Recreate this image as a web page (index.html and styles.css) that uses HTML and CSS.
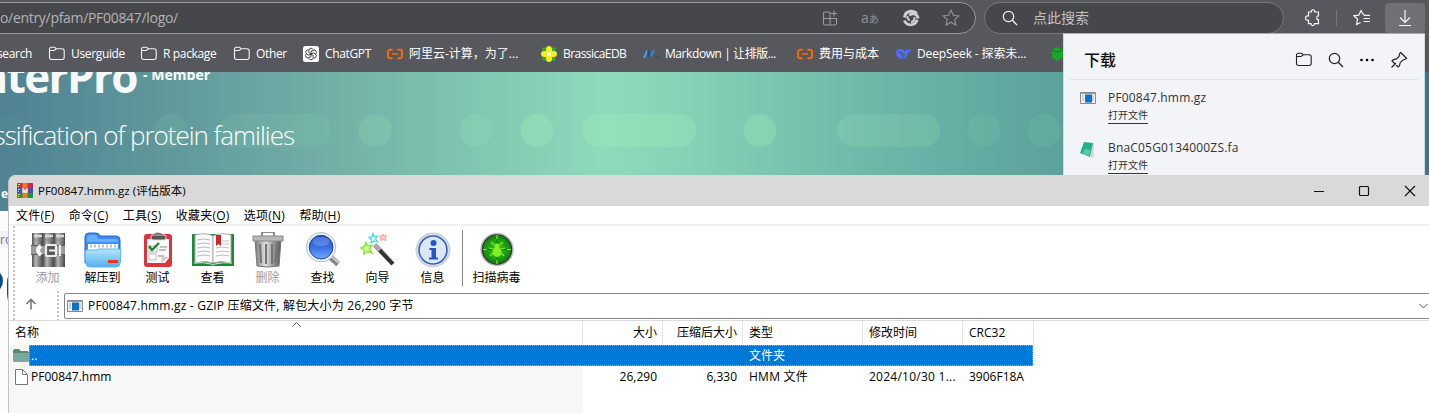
FILE: index.html
```html
<!DOCTYPE html>
<html lang="zh-CN">
<head>
<meta charset="utf-8">
<title>InterPro</title>
<link rel="stylesheet" href="styles.css">
</head>
<body>
<svg class="defs" width="0" height="0">
  <defs>
    <symbol id="folder-line" viewBox="0 0 18 18"><path d="M1.500 4.200q0-2 2-2h2.600q.8 0 1.300.6l1 1h5.600q2.200 0 2.200 2.200v6.300q0 2.200-2.200 2.200H3.700q-2.200 0-2.200-2.200zM1.700 5.500h4q.7 0 1.200-.6l1.300-1.100" fill="none" stroke="currentColor" stroke-width="1.100"/></symbol>
    <symbol id="search" viewBox="0 0 16 16"><circle cx="6.500" cy="6.500" r="5.200" fill="none" stroke="currentColor" stroke-width="1.200"/><path d="M10.300 10.300l4.700 4.700" stroke="currentColor" stroke-width="1.300"/></symbol>
    <symbol id="aliyun" viewBox="0 0 16 12"><path d="M5.500 1.800H3.500Q1 1.800 1 4v4q0 2.200 2.500 2.200h2M10.500 1.800h2Q15 1.800 15 4v4q0 2.200-2.500 2.200h-2" fill="none" stroke="#ff6a00" stroke-width="1.900"/><path d="M5 6h6" stroke="#ff6a00" stroke-width="1.400"/></symbol>
    <symbol id="archive" viewBox="0 0 16 12"><path d="M.5.500h15v11H.5z" fill="#f4f4f4" stroke="#888"/><path d="M1 1.500h14" stroke="#999"/><path d="M2 4h2M2 6h2M2 8h2M12 4h2M12 6h2M12 8h2" stroke="#aaa"/><path d="M5 2.500h7v8H5z" fill="#0b72c8"/></symbol>
    <linearGradient id="book" x2="1"><stop offset="0" stop-color="#505050"/><stop offset=".35" stop-color="#b8b8b8"/><stop offset=".6" stop-color="#8a8a8a"/><stop offset="1" stop-color="#484848"/></linearGradient>
    <linearGradient id="metal" x2="1"><stop offset="0" stop-color="#777"/><stop offset=".4" stop-color="#e4e4e4"/><stop offset="1" stop-color="#555"/></linearGradient>
    <linearGradient id="sky" x2="0" y2="1"><stop offset="0" stop-color="#b5e4ff"/><stop offset="1" stop-color="#55b0f2"/></linearGradient>
    <linearGradient id="lens" x2="0" y2="1"><stop offset="0" stop-color="#1c43bd"/><stop offset=".5" stop-color="#3a6fe0"/><stop offset="1" stop-color="#6aaaff"/></linearGradient>
    <radialGradient id="radar"><stop offset="0" stop-color="#37c91c"/><stop offset="1" stop-color="#128812"/></radialGradient>
  </defs>
</svg>
<div class="screen">
  <header class="toolbar">
    <div class="address">
      <span class="url">o/entry/pfam/PF00847/logo/</span>
      <div class="address-icons">
        <svg width="16" height="16" viewBox="0 0 16 16" fill="none" stroke="#9b9b9d" stroke-width="1.100"><path d="M7.500 2H3Q1.500 2 1.500 3.500v10Q1.500 15 3 15h10q1.500 0 1.500-1.500V8.500h-13M8 2v13M12 .5v6M9 3.500h6"/></svg>
        <span class="translate">a<small>あ</small></span>
        <svg width="18" height="18" viewBox="0 0 18 18" fill="none" stroke="#cfcfd0"><path d="M2.500 8.500Q3 3 8.500 2.300q4-.3 6.300 2.700" stroke-width="3"/><path d="M2.300 11.500Q4 15.500 8.500 15.800q5 0 6.800-5" stroke-width="2.800"/><path d="M7.500 6.500Q9 4 12.500 5q3.500 1.200 3.500 4.500" stroke-width="2.800"/><path d="M12.500 8q.5 4.500-3.500 5" stroke-width="2"/><path d="M5.500 7q-.5 3 2.200 4.500" stroke-width="2"/></svg>
        <svg width="18" height="18" viewBox="0 0 18 18"><path d="M9 1.300l2.300 5 5.400.6-4 3.700 1.100 5.400L9 13.300 4.200 16l1.100-5.400-4-3.700 5.400-.6z" fill="none" stroke="#929295" stroke-width="1.200"/></svg>
      </div>
    </div>
    <div class="search"><svg width="16" height="16"><use href="#search"/></svg><span>点此搜索</span></div>
    <div class="actions">
      <svg width="18" height="18" viewBox="0 0 18 18" fill="none" stroke="#f5f5f5" stroke-width="1.200"><path d="M4.500 3h3Q7 .8 9 .8t1.700 2.200h3.800v4q-1.800-.3-1.800 1.800t1.800 1.900v4h-4q-.2 1.900-1.800 1.900T7 14.700H4.500v-3.500Q1.500 11.500 1.500 9t3-2z"/></svg>
      <i class="divider"></i>
      <svg width="18" height="18" viewBox="0 0 18 18" fill="none" stroke="#f5f5f5" stroke-width="1.200"><path d="M10 5L8 1.500 5.800 6.200 1 6.800l3.600 3.500-1 5.200 4-2M10 5l1 1M11 6.300h6M10.500 9.500H17M10.500 12.500H17"/></svg>
      <span class="dl"><svg width="18" height="18" viewBox="0 0 18 18" fill="none" stroke="#f5f5f5" stroke-width="1.200"><path d="M9 1v12M4 8.500l5 5 5-5M3 16.500h12"/></svg></span>
    </div>
  </header>
  <nav class="bookmarks">
    <div class="bm b0"><span class="t0">search</span></div>
    <div class="bm b1"><svg width="18" height="18"><use href="#folder-line"/></svg><span>Userguide</span></div>
    <div class="bm b2"><svg width="18" height="18"><use href="#folder-line"/></svg><span>R package</span></div>
    <div class="bm b3"><svg width="18" height="18"><use href="#folder-line"/></svg><span>Other</span></div>
    <div class="bm b4"><svg width="16" height="16" viewBox="0 0 16 16"><rect width="16" height="16" rx="2.500" fill="#fff"/><g fill="none" stroke="#222" stroke-width=".8"><path id="petal" d="M5.800 6.700V4.300q.3-2 2.200-2.100 1.500 0 2.300 1.400M5.800 6.700L8 8"/><use href="#petal" transform="rotate(60 8 8)"/><use href="#petal" transform="rotate(120 8 8)"/><use href="#petal" transform="rotate(180 8 8)"/><use href="#petal" transform="rotate(240 8 8)"/><use href="#petal" transform="rotate(300 8 8)"/></g></svg><span>ChatGPT</span></div>
    <div class="bm b5"><svg width="16" height="12"><use href="#aliyun"/></svg><span>阿里云-计算，为了...</span></div>
    <div class="bm b6"><svg width="16" height="16" viewBox="0 0 16 16"><path d="M1.500 1.500h4v4h-4zM10.500 1.500h4v4h-4zM1.500 10.500h4v4h-4zM10.500 10.500h4v4h-4z" fill="#2eae34"/><g fill="#ffed16"><ellipse cx="8" cy="3.500" rx="3" ry="3.500"/><ellipse cx="8" cy="12.500" rx="3" ry="3.500"/><ellipse cx="3.500" cy="8" rx="3.500" ry="3"/><ellipse cx="12.500" cy="8" rx="3.500" ry="3"/><circle cx="8" cy="8" r="4"/></g><circle cx="8" cy="8" r="2" fill="#fff"/></svg><span>BrassicaEDB</span></div>
    <div class="bm b7"><svg width="16" height="12" viewBox="0 0 16 12" fill="none" stroke-width="1.800"><path d="M1 10L4.500 2" stroke="#4aa8f0"/><path d="M5 2l2 8" stroke="#154e86"/><path d="M7.500 9L11 2" stroke="#2b8cdc"/><path d="M13.500 9.200h2" stroke="#155494"/></svg><span>Markdown | 让排版...</span></div>
    <div class="bm b8"><svg width="16" height="12"><use href="#aliyun"/></svg><span>费用与成本</span></div>
    <div class="bm b9"><svg width="16" height="14" viewBox="0 0 16 14"><path d="M1 5q1-4 6-3 2 1 3 3l1-2q-1-2 0-2 1 2 2 2t3-1q0 3-3 4-.5 3-2 4l1 1.500q-2 .5-3.500-.5Q5 13 2.500 10 .6 8 1 5z" fill="#4d6bfe"/><path d="M3.500 5q3 0 5 5M8.500 7l1.500 1" stroke="#57585d" stroke-width="1.300" fill="none"/></svg><span>DeepSeek - 探索未...</span></div>
    <div class="bm b10"><svg width="14" height="16" viewBox="0 0 14 16"><path d="M1 3.500l5-2.500 6 2.500v8L6.500 15 1 11.500z" fill="#19a52b"/><path d="M0 4l6 2 6-2" stroke="#0d7f20" fill="none"/></svg></div>
  </nav>
  <main class="page">
    <section class="hero">
      <svg class="pattern" width="1429" height="139" fill="#9ff0b8"><g opacity=".04"><circle cx="9" cy="58.500" r="16.500"/></g><g opacity=".09"><circle cx="171" cy="58.500" r="16.500"/><rect x="218" y="42" width="113" height="33" rx="16.500"/><circle cx="984" cy="58.500" r="16.500"/><circle cx="1044" cy="58.500" r="16.500"/></g><g opacity=".17"><circle cx="375" cy="58.500" r="16.500"/><circle cx="476" cy="58.500" r="16.500"/><rect x="837" y="42" width="103" height="33" rx="16.500"/></g><g opacity=".32"><circle cx="537" cy="58.500" r="16.500"/><rect x="582" y="42" width="114" height="33" rx="16.500"/><circle cx="760" cy="58.500" r="16.500"/></g></svg>
      <div class="brand"><h1>InterPro</h1><span class="member">- Member</span></div>
      <p class="tagline">Classification of protein families</p>
      <span class="hero-tab">e</span>
    </section>
    <div class="tabrow">ro</div>
    <svg class="dots" width="12" height="40" viewBox="0 0 12 40"><circle cx="-10" cy="11" r="13" fill="#0d4b83"/><path d="M9 5q-2 3-2 8v11q0 5 2 8z" fill="#0d4b83"/></svg>
  </main>

  <aside class="downloads">
    <div class="dl-head"><h2>下载</h2>
      <svg width="18" height="18"><use href="#folder-line"/></svg>
      <svg width="16" height="16"><use href="#search"/></svg>
      <svg width="16" height="16" viewBox="0 0 16 16"><circle cx="2.500" cy="8" r="1.300"/><circle cx="8" cy="8" r="1.300"/><circle cx="13.500" cy="8" r="1.300"/></svg>
      <svg width="18" height="18" viewBox="0 0 18 18" fill="none" stroke="#222" stroke-width="1.200"><path d="M1.500 16.500L6 12M10.700 1.500l5.800 5.800-1.300 1-2.600.9-2.400 2.500-.8 3.300L8 16 2 10l1-1.200 3.500-.9L9 5.500l.7-2.900z"/></svg>
    </div>
    <div class="file"><svg width="16" height="12"><use href="#archive"/></svg><div><span class="fname">PF00847.hmm.gz</span><a>打开文件</a></div></div>
    <div class="file"><svg width="16" height="16" viewBox="0 0 16 16"><path d="M10 1l4 0 0 14-3 1z" fill="#e0d7c8"/><path d="M4 0l9 1-3 14-10-4z" fill="#1eb28d"/><path d="M4.500 7l6 1-1.500 6-6-2.500z" fill="#62c6ac"/></svg><div><span class="fname">BnaC05G0134000ZS.fa</span><a>打开文件</a></div></div>
  </aside>

  <section class="window">
    <div class="titlebar">
      <svg width="16" height="15" viewBox="0 0 16 15"><path d="M0 0h16v5H0z" fill="#c52a50"/><path d="M0 5h16v5H0z" fill="#3d52b4"/><path d="M0 10h16v5H0z" fill="#159747"/><path d="M1 1.500h2M1 6.500h2M1 11.500h2M1 3.500h1M1 8.500h1M1 13.500h1" stroke="#f4df47"/><path d="M5.500 0h5v15h-5z" fill="#ee7b25"/><path d="M4.500 5h7v5h-7z" fill="#be5020"/><path d="M6 5v4h4V5M8 6v3" fill="none" stroke="#fff" stroke-width="1.300"/></svg>
      <span>PF00847.hmm.gz (评估版本)</span>
      <div class="controls"><svg width="102" height="12" viewBox="0 0 102 12" fill="none" stroke="#111"><path d="M0 6.500h10"/><rect x="45.500" y="1.500" width="9" height="9" rx="1" stroke-width="1.200"/><path d="M91 1l10 10M101 1L91 11" stroke-width="1.200"/></svg></div>
    </div>
    <div class="menu"><span>文件(<u>F</u>)</span><span>命令(<u>C</u>)</span><span>工具(<u>S</u>)</span><span>收藏夹(<u>O</u>)</span><span>选项(<u>N</u>)</span><span>帮助(<u>H</u>)</span></div>
    <div class="tools">
      <i class="grip"></i>
      <div class="tools-main">
        <div class="commands">
          <div class="cmd off"><svg width="36" height="36" viewBox="0 0 36 36"><path d="M2 1h11v34H2z" fill="url(#book)"/><path d="M13 1h11v34H13z" fill="url(#book)"/><path d="M24 1h11v34H24z" fill="url(#book)"/><path d="M4 4h8M15 4h8M26 4h8" stroke="#d8d8d8" stroke-width="2.500"/><path d="M4 8h8M15 8h8M26 8h8" stroke="#888"/><path d="M1 13h34v10H1z" fill="#9b9b9b"/><path d="M1 13.500h34M1 22.500h34" stroke="#5d5d5d"/><path d="M11 14q-6 4 0 9" stroke="#f7f7f7" stroke-width="4" fill="none"/><rect x="16" y="13" width="10" height="11" rx="1" fill="#595959" stroke="#eee" stroke-width="2.200"/><path d="M19 18.500h8M30 13v11" stroke="#eee" stroke-width="2.200"/></svg><span>添加</span></div>
          <div class="cmd"><svg width="38" height="36" viewBox="0 0 38 36"><path d="M1 31V5q0-4 4-4h7q3 0 4 3h16q4 0 4 4v23z" fill="#3d8df5" stroke="#2465d8"/><path d="M3 10V6q0-3 3-3h5q2 0 3 4h17q3 0 3 3z" fill="#69adfb"/><path d="M4 12h30v9H4z" fill="#fff"/><path d="M6 14h2M10 14h2M14 14h2M18 14h2M22 14h2M26 14h2M30 14h2" stroke="#c2c2c2" stroke-width="3"/><path d="M3 18h10l2-1h20q2 0 2 3l-1 11q0 4-4 4H6q-4 0-4-4L1 21q0-3 2-3z" fill="url(#sky)" stroke="#5db7f6"/><path d="M24 28h10v3H24z" fill="#ed3224"/></svg><span>解压到</span></div>
          <div class="cmd"><svg width="30" height="36" viewBox="0 0 30 36"><rect x="1" y="2" width="28" height="33" rx="3" fill="#dd333b"/><path d="M4 7h22v19l-4 5H4z" fill="#fafafa"/><path d="M18 31l1-6h7z" fill="#ccc"/><rect x="8" y="3" width="15" height="5" rx="2" fill="#555" stroke="#ddd"/><path d="M11 3q4-3 8 0" stroke="#777" stroke-width="2" fill="none"/><path d="M6 14h8v6H6zM6 22h7v6H6z" fill="none" stroke="#bbb"/><path d="M6 14l3 4 7-7" fill="none" stroke="#12892b" stroke-width="2.300"/><path d="M17 15h7M16 18h7M15 24h6" stroke="#888"/></svg><span>测试</span></div>
          <div class="cmd"><svg width="42" height="36" viewBox="0 0 42 36"><path d="M0 3q0-1 1-1h40q1 0 1 1v31H0z" fill="#168a36"/><path d="M3 3q11-3 18 1v27q-8-3-18 0z" fill="#fafafa" stroke="#aaa"/><path d="M39 3q-11-3-18 1v27q8-3 18 0z" fill="#fff" stroke="#aaa"/><path d="M5 8q7-2 13 0M5 12q7-2 13 0M5 16q7-2 13 0M5 20q7-2 13 0M5 24q7-2 13 0M24 16q7-2 13 0M24 20q7-2 13 0M24 24q7-2 13 0M31 9h6M31 12h6" fill="none" stroke="#bbb"/><path d="M24 3h5v11l-2.500-2-2.500 2z" fill="#cc272c"/><path d="M2 31q10-1 17 1 2 2 4 0 8-2 17-1" stroke="#ddd" fill="none"/></svg><span>查看</span></div>
          <div class="cmd off"><svg width="32" height="36" viewBox="0 0 32 36"><path d="M3 8h26l-2 26q-11 2-22 0z" fill="url(#metal)" stroke="#777"/><path d="M8 12l1 19M14 12v20M20 12v20M25 12l-2 19" stroke="#757575" stroke-width="2"/><path d="M1 4h30v5H1z" fill="#b8b8b8" stroke="#888"/><path d="M10 4V0h12v4" fill="none" stroke="#888" stroke-width="2"/></svg><span>删除</span></div>
          <div class="cmd"><svg width="38" height="38" viewBox="0 0 38 38"><path d="M26 26l9 8" stroke="#85858c" stroke-width="6"/><path d="M28 26l8 7" stroke="#d0d0d4" stroke-width="2"/><circle cx="17" cy="16" r="15.500" fill="#edf4fa" stroke="#a8b7c7"/><circle cx="17" cy="16" r="12.500" fill="url(#lens)" stroke="#1d4390"/><ellipse cx="17" cy="10" rx="9" ry="5" fill="#91b9fa" opacity=".4"/></svg><span>查找</span></div>
          <div class="cmd"><svg width="36" height="36" viewBox="0 0 36 36"><path d="M15 13l18 19" stroke="#343434" stroke-width="4.500"/><path d="M15 13l5 5" stroke="#aaa" stroke-width="4.500"/><path d="M17 12l17 18" stroke="#bbb"/><path d="M6 10.500l2 3.500 4-.5-2.500 3.500 2.500 4-4.500-1.500-3.500 2.500v-4l-3-2 3.500-1.500z" fill="#d8ff9c" stroke="#8be63a" stroke-width="1.500"/><path d="M13 1.500l1 3 3.500-.5-2 3 2 3-3.500-1-3 2 .5-3.500-2.500-2.500h3z" fill="#e3ffff" stroke="#3adce9" stroke-width="1.200"/><path d="M23 2l1 2h2.500l-1.500 2 1 2.500-3-1-2.500 1 .5-2.500-1.500-2h2.500z" fill="#ffd1d1" stroke="#f99"/></svg><span>向导</span></div>
          <div class="cmd"><svg width="36" height="36" viewBox="0 0 36 36"><circle cx="18" cy="18" r="16.500" fill="#e3e9f0" stroke="#cbd2da" stroke-width="2"/><circle cx="18" cy="18" r="14" fill="#dce7f5" stroke="#3561bd" stroke-width="1.600"/><circle cx="18.500" cy="11" r="3" fill="#2555c5"/><path d="M14.500 16h6.500v9.500h2v2h-9v-2h2.500v-7.500h-2z" fill="#2555c5"/></svg><span>信息</span></div>
          <i class="sep"></i>
          <div class="cmd scan"><svg width="36" height="36" viewBox="0 0 36 36"><circle cx="18" cy="17.500" r="16" fill="#303831" stroke="#bbb" stroke-width="1.500"/><circle cx="18" cy="17.500" r="14" fill="url(#radar)"/><path d="M18 4v27M5 17.500h26M8 9q10-8 20 0M8 26q10 8 20 0" fill="none" stroke="#0d7d12"/><path d="M18 3v4M18 28v4M4 17.500h4M28 17.500h4M12 10l3 3M24 10l-3 3M10 16l4 1M26 16l-4 1M11 24l3-3M25 24l-3-3" stroke="#80ef23" stroke-width="1.200"/><ellipse cx="18" cy="20" rx="4.500" ry="5" fill="#80ef23"/><circle cx="18" cy="14" r="2.500" fill="#80ef23"/></svg><span>扫描病毒</span></div>
        </div>
        <div class="pathrow">
          <svg class="up" width="12" height="12" viewBox="0 0 12 12" fill="none" stroke="#777" stroke-width="1.600"><path d="M6 11.500V1.500M1.500 6L6 1.500 10.500 6"/></svg>
          <i class="grip"></i>
          <div class="path"><svg width="16" height="12"><use href="#archive"/></svg><span>PF00847.hmm.gz - GZIP 压缩文件, 解包大小为 26,290 字节</span><svg class="chev" width="9" height="6" viewBox="0 0 9 6"><path d="M.5 1l4 4 4-4" fill="none" stroke="#555"/></svg></div>
        </div>
      </div>
    </div>
    <div class="list">
      <div class="cols head"><span>名称<svg class="sort" width="9" height="5" viewBox="0 0 9 5"><path d="M.5 4.500l4-4 4 4" fill="none" stroke="#555"/></svg></span><span class="r">大小</span><span class="r">压缩后大小</span><span>类型</span><span>修改时间</span><span>CRC32</span></div>
      <div class="row selected"><svg width="16" height="13" viewBox="0 0 16 13"><path d="M0 2q0-2 2-2h4l2 2h6q2 0 2 2v7q0 2-2 2H2q-2 0-2-2z" fill="#5c8b6b"/><path d="M0 4h16v7q0 2-2 2H2q-2 0-2-2z" fill="#7aa99f"/></svg><div class="selection"><b>..</b><em>文件夹</em></div></div>
      <div class="row cols item"><span class="name"><svg width="13" height="16" viewBox="0 0 13 16"><path d="M.5.500h7l5 5v10H.5zM7.500.5v5h5" fill="#fff" stroke="#777"/></svg><b>PF00847.hmm</b></span><span class="r">26,290</span><span class="r">6,330</span><span class="wide">HMM 文件</span><span class="wide">2024/10/30 1...</span><span>3906F18A</span></div>
    </div>
  </section>
</div>
</body>
</html>
```

FILE: styles.css
```css
* { box-sizing: border-box; }
body { margin: 0; background: #fff; }
svg { display: block; flex: none; }
i, em { font-style: normal; }
.defs { position: absolute; }
.screen { position: relative; width: 1429px; height: 413px; overflow: hidden; font: 12px/16px "Open Sans", "Noto Sans CJK SC", sans-serif; white-space: nowrap; color: #000; }

.toolbar { display: flex; height: 36px; padding-top: 2px; background: #57585d; }
.address { display: flex; align-items: center; justify-content: space-between; width: 996px; height: 32px; margin-left: -20px; padding: 0 15px 0 19px; border: 1px solid #98989b; border-radius: 16px; background: #46474b; color: #b3b3b4; }
.url { font-size: 14px; letter-spacing: -.31px; }
.address-icons { display: flex; align-items: center; gap: 22px; }
.translate { width: 19px; font-size: 14px; color: #929295; line-height: 16px; }
.translate small { font-size: 10px; }
.address-icons svg:first-child { margin-right: 1px; }
.search { display: flex; align-items: center; gap: 15px; width: 300px; height: 32px; margin-left: 8px; padding-left: 17px; border: 1px solid #77777b; border-radius: 16px; background: #46474b; color: #c2c2c3; font-size: 14px; }
.search svg { color: #f2f2f2; }
.actions { display: flex; align-items: center; height: 32px; margin-left: 20px; }
.divider { width: 1px; height: 16px; margin: 0 16px 0 14px; background: #77787c; }
.dl { display: flex; align-items: center; justify-content: center; width: 40px; height: 30px; margin-left: 14px; background: #707176; border-radius: 4px; }

.bookmarks { display: flex; align-items: center; height: 36px; background: #57585d; color: #fff; letter-spacing: -.35px; }
.bm { display: flex; align-items: center; flex: none; gap: 6px; }
.bm svg { color: #f4f4f4; }
.b0 { width: 48px; }
.b1 { width: 92px; gap: 5px; }
.b2 { width: 93px; gap: 5px; }
.b3 { width: 70px; gap: 5px; }
.b4 { width: 84px; }
.b5 { width: 154px; letter-spacing: 0; }
.b6 { width: 102px; letter-spacing: -.55px; }
.b7 { width: 154px; letter-spacing: -.42px; }
.b8 { width: 98px; letter-spacing: 0; }
.b9 { width: 156px; letter-spacing: -.13px; }
.t0 { margin-left: -3px; }

.page { position: relative; height: 341px; background: #fcfcfe; }
.hero { position: relative; height: 139px; overflow: hidden; color: #fff; background: linear-gradient(90deg, #508293 0, #5c9399 130px, #76b4a9 360px, #84ccb4 510px, #8edbbb 605px, #83d0b5 700px, #6ab4a8 900px, #5aa29b 1063px, #37788a 1429px); }
.pattern { position: absolute; inset: 0; }
.brand { position: relative; display: flex; height: 50px; margin-left: -42px; }
.brand h1 { display: flex; justify-content: flex-end; width: 179px; margin: -26px 0 0; font-size: 44px; line-height: 61px; font-weight: 700; letter-spacing: -1.600px; color: #f7f9f9; }
.member { margin: -7px 0 0 6px; font-size: 14px; line-height: 20px; font-weight: 700; letter-spacing: .05px; }
.tagline { position: relative; display: flex; justify-content: flex-end; width: 294px; margin: -5px 0 0; font-size: 26px; line-height: 36px; font-weight: 300; letter-spacing: -1.020px; }
.hero-tab { display: block; margin: 33px 0 0 1px; font-weight: 700; }
.tabrow { height: 17px; margin-top: 20px; background: #f0effa; color: #6c6b86; line-height: 17px; }
.dots { margin-top: 22px; }

.downloads { position: absolute; left: 1063px; top: 33px; width: 362px; height: 150px; padding: 0 7px; background: #f2f4f8; border: 1px solid #d5d8dc; border-top-color: #a9aaae; color: #333; }
.dl-head { display: flex; align-items: center; height: 46px; padding: 7px 10px 0 14px; border-bottom: 1px solid #dfe1e6; margin: 0 -1px 10px; }
.dl-head h2 { width: 209px; margin: 0; font-size: 16px; line-height: 22px; font-weight: 500; color: #111; }
.dl-head svg { margin-left: 15px; color: #222; }
.dl-head h2 + svg { margin-left: 13px; }
.file { display: flex; gap: 12px; height: 50px; padding-left: 9px; }
.file > svg { margin-top: 2px; }
.file div { display: flex; flex-direction: column; align-items: flex-start; }
.fname { letter-spacing: .18px; }
.file a { height: 15px; margin-top: 3px; border-bottom: 1px solid #333; font-size: 10px; line-height: 12px; }

.window { position: absolute; left: 8px; top: 175px; width: 1421px; height: 238px; border-left: 1px solid #bfc3c6; border-radius: 8px 0 0; overflow: hidden; background: #fff; }
.titlebar { display: flex; align-items: center; height: 31px; padding-left: 8px; background: #d9d9d9; }
.titlebar span { margin-left: 5px; font-size: 11.500px; }
.controls { margin-left: auto; padding-right: 13px; }
.menu { display: flex; gap: 14.300px; height: 20px; padding-left: 7px; line-height: 19px; border-bottom: 2px solid #f0f0f0; letter-spacing: .22px; }
.menu u { text-underline-offset: 2px; }
.tools { display: flex; height: 95px; padding-left: 4px; border-bottom: 1px solid #dcdcdc; }
.grip { flex: none; width: 2px; background: repeating-linear-gradient(#c2c2c2 0 2px, transparent 2px 4px); }
.commands { display: flex; height: 65px; padding-left: 5px; }
.cmd { display: flex; flex-direction: column; align-items: center; width: 55px; }
.cmd svg { height: 36px; margin-top: 6px; }
.cmd span { line-height: 19px; }
.off { color: #9b9b9b; }
.sep { width: 1px; height: 56px; margin: 4px 3px 0 2px; background: #888; }
.scan { width: 61px; }
.tools-main { flex: 1; }
.pathrow { display: flex; align-items: center; height: 29px; padding-left: 10px; }
.up { margin: -4px 20px 0 0; }
.pathrow .grip { height: 29px; }
.path { display: flex; flex: 1; align-items: center; height: 26px; margin: 0 -4px 0 5px; padding: 0 4px 0 2px; border: 1px solid #858585; border-radius: 2px; }
.path span { margin: 1px 0 0 5px; letter-spacing: .2px; }
.chev { margin-left: auto; }

.list { height: 92px; background: linear-gradient(90deg, #f7f7f7 574px, #fff 574px); }
.cols { display: grid; grid-template-columns: 574px 80px 80px 120px 100px 71px; }
.cols > span { padding: 0 5px 0 6px; }
.cols .r { text-align: right; }
.item .r { padding-right: 6px; }
.head { height: 24px; background: #fff; line-height: 23px; }
.head > span { position: relative; border-right: 1px solid #e2e2e2; }
.sort { position: absolute; left: 283px; top: 1px; }
.row { height: 21px; }
.selected { display: flex; align-items: center; padding-left: 4px; }
.selection { display: flex; width: 1004px; height: 21px; line-height: 19px; color: #fff; background: #0078d7; border: 1px dotted #f49a43; }
.selection b { width: 719px; padding-left: 1px; }
.row b { font-weight: 400; }
.item { line-height: 21px; }
.item .name { display: flex; align-items: center; gap: 3px; }
.wide { letter-spacing: .25px; }
```
